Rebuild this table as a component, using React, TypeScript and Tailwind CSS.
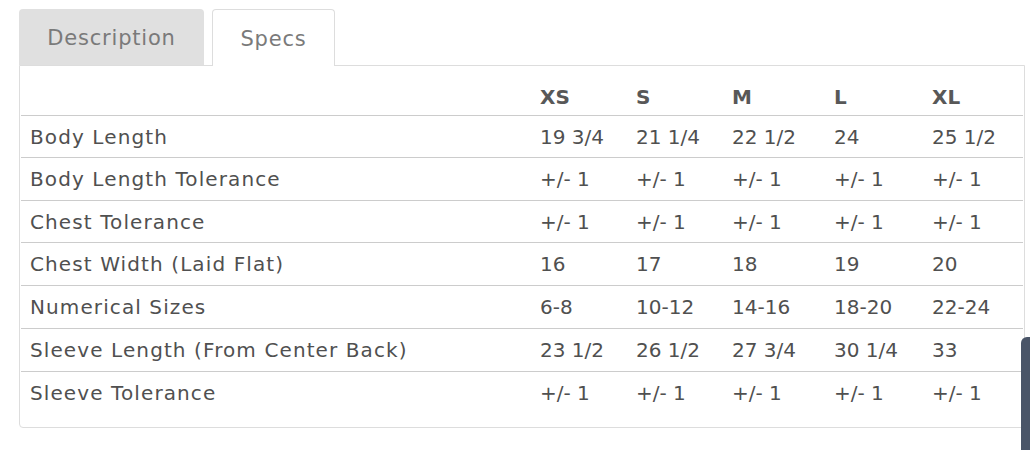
const sizes = ["XS", "S", "M", "L", "XL"];

const rows: { label: string; values: string[]; h: string }[] = [
  { label: "Body Length", values: ["19 3/4", "21 1/4", "22 1/2", "24", "25 1/2"], h: "h-[42px]" },
  { label: "Body Length Tolerance", values: ["+/- 1", "+/- 1", "+/- 1", "+/- 1", "+/- 1"], h: "h-[43px]" },
  { label: "Chest Tolerance", values: ["+/- 1", "+/- 1", "+/- 1", "+/- 1", "+/- 1"], h: "h-[42px]" },
  { label: "Chest Width (Laid Flat)", values: ["16", "17", "18", "19", "20"], h: "h-[43px]" },
  { label: "Numerical Sizes", values: ["6-8", "10-12", "14-16", "18-20", "22-24"], h: "h-[43px]" },
  { label: "Sleeve Length (From Center Back)", values: ["23 1/2", "26 1/2", "27 3/4", "30 1/4", "33"], h: "h-[43px]" },
  { label: "Sleeve Tolerance", values: ["+/- 1", "+/- 1", "+/- 1", "+/- 1", "+/- 1"], h: "h-[43px]" },
];

const cols = "grid grid-cols-[510px_96px_96px_102px_98px_98px]";

export default function App() {
  return (
    <div className="relative w-[1030px] h-[450px] bg-white overflow-hidden font-['DejaVu_Sans',sans-serif]">
      <div className="pl-[19px] pt-[9px]">
        {/* Tabs */}
        <div className="flex gap-2 text-[21px] tracking-[0.8px] text-[#7a7a7a]">
          <div className="w-[185px] h-[56px] pt-[3px] flex items-center justify-center bg-[#e0e0e0] rounded-t-[4px]">
            Description
          </div>
          <div className="w-[123px] h-[57px] pt-[3px] -mb-px z-10 flex items-center justify-center bg-white border border-b-0 border-[#ddd] rounded-t-[4px]">
            Specs
          </div>
        </div>

        {/* Panel */}
        <div className="w-[1006px] border border-[#ddd] rounded-b-[4px] pt-[6px] pb-[13px] px-px text-[20px] text-[#505050]">
          <div className={`${cols} h-[43px] items-center pt-[6px] font-bold text-[#585858]`}>
            <div className="pl-[9px]"></div>
            {sizes.map((s) => (
              <div key={s} className="pl-[9px]">{s}</div>
            ))}
          </div>
          {rows.map((r) => (
            <div key={r.label} className={`${cols} ${r.h} items-center border-t border-[#ccc]`}>
              <div className="pl-[9px] tracking-[1.1px]">{r.label}</div>
              {r.values.map((v, i) => (
                <div key={i} className="pl-[9px]">{v}</div>
              ))}
            </div>
          ))}
        </div>
      </div>

      {/* scroll handle overlay */}
      <div className="absolute left-[1021px] top-[337px] w-[9px] h-[113px] bg-[#4a5568] rounded-tl-[6px]"></div>
    </div>
  );
}
